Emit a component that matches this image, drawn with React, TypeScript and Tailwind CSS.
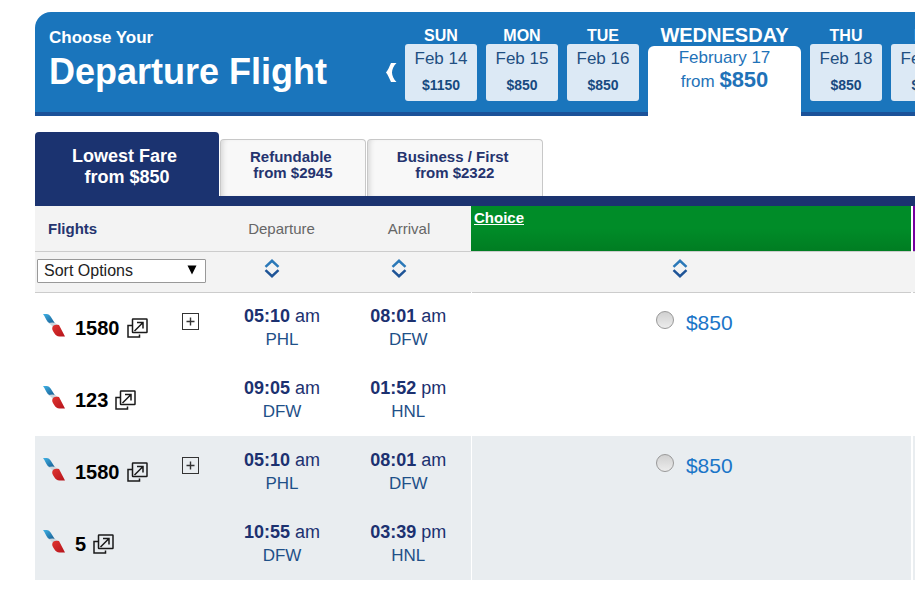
import { useState } from 'react'

interface Leg {
  flight: string
  depart: [string, string, string]
  arrive: [string, string, string]
}

interface Itinerary {
  id: string
  price: string
  legs: Leg[]
}

const days = [
  { day: 'SUN', date: 'Feb 14', price: '$1150' },
  { day: 'MON', date: 'Feb 15', price: '$850' },
  { day: 'TUE', date: 'Feb 16', price: '$850' },
  { day: 'WEDNESDAY', date: 'February 17', price: '$850', selected: true },
  { day: 'THU', date: 'Feb 18', price: '$850' },
  { day: 'FRI', date: 'Feb 19', price: '$850' },
]

const tabs = [
  { name: 'Lowest Fare', price: '$850' },
  { name: 'Refundable', price: '$2945' },
  { name: 'Business / First', price: '$2322' },
]

const itineraries: Itinerary[] = [
  {
    id: 'a',
    price: '$850',
    legs: [
      { flight: '1580', depart: ['05:10', 'am', 'PHL'], arrive: ['08:01', 'am', 'DFW'] },
      { flight: '123', depart: ['09:05', 'am', 'DFW'], arrive: ['01:52', 'pm', 'HNL'] },
    ],
  },
  {
    id: 'b',
    price: '$850',
    legs: [
      { flight: '1580', depart: ['05:10', 'am', 'PHL'], arrive: ['08:01', 'am', 'DFW'] },
      { flight: '5', depart: ['10:55', 'am', 'DFW'], arrive: ['03:39', 'pm', 'HNL'] },
    ],
  },
]

function AirlineLogo() {
  return (
    <svg width="22" height="24" viewBox="0 0 22 24" className="mb-[6px] shrink-0" aria-hidden="true">
      <defs>
        <linearGradient id="tail-blue" x1="0" y1="0" x2="1" y2="1">
          <stop offset="0" stopColor="#3fb2e6" />
          <stop offset="1" stopColor="#155a8f" />
        </linearGradient>
        <linearGradient id="tail-red" x1="0" y1="0" x2="1" y2="1">
          <stop offset="0" stopColor="#e0342f" />
          <stop offset="1" stopColor="#b5141c" />
        </linearGradient>
      </defs>
      <path d="M0 1H3.500C5.500 1 6.800 2.200 7.800 3.800L12 10.500C9 10 6.500 10.800 4.800 9C3.200 7 2 3.500 0 1Z" fill="url(#tail-blue)" />
      <path d="M5.500 10C9.500 9 13 9 15 12.500L10.500 15.500C9.500 13 8 11.500 5.500 10Z" fill="#ccd6dd" />
      <path d="M9.200 15C9.500 12 12.500 11 16 12L22 23.500H16.500C14 23.500 12.500 22 11.200 20C10.100 18.300 9.100 17 9.200 15Z" fill="url(#tail-red)" />
    </svg>
  )
}

function PopupIcon() {
  return (
    <svg width="21" height="20" viewBox="0 0 21 20" fill="none" stroke="#1a1a1a" strokeWidth="1.500" aria-hidden="true">
      <rect x="5.500" y="1" width="14.500" height="13.500" rx="0.500" />
      <path d="M5 7.500H1V19H12.500V16.500" />
      <path d="M7.500 13L16 4.500M10 4.500H16V10.500" />
    </svg>
  )
}

function SortButton({ label }: { label: string }) {
  return (
    <button type="button" aria-label={label} className="mx-auto block">
      <svg width="16" height="19" viewBox="0 0 16 19" fill="none" strokeWidth="2.500" aria-hidden="true">
        <path d="M1.500 7.800L8 1.800L14.500 7.800" stroke="#2a78b8" />
        <path d="M1.500 11.200L8 17.200L14.500 11.200" stroke="#1e5497" />
      </svg>
    </button>
  )
}

function TimeCell({ value }: { value: [string, string, string] }) {
  const [time, suffix, airport] = value
  return (
    <td className="p-0 pl-px text-center">
      <div className="text-lg leading-6 text-[#1c3170]">
        <b>{time}</b> {suffix}
      </div>
      <div className="text-[17px] leading-6 text-[#1f5088]">{airport}</div>
    </td>
  )
}

function DateStrip() {
  return (
    <header className="flex h-[104px] items-start overflow-hidden rounded-tl-2xl bg-[#1a75bc] shadow-[inset_0_-4px_0_#1b5299]">
      <h1 className="w-[350px] shrink-0 pt-4 pl-[14px] font-bold text-white">
        <span className="block text-[17px] leading-5">Choose Your</span>
        <span className="block text-4xl leading-[48px]">Departure Flight</span>
      </h1>
      <button type="button" aria-label="Earlier dates" className="mt-[51px] w-5 shrink-0">
        <svg width="12" height="19" viewBox="0 0 12 19" aria-hidden="true">
          <path d="M6 0H11.500C8.500 3 7 6.500 7 9.500C7 12.500 8.500 16 11.500 19H6C4.500 15.500 3 12 1 9.500C3 7 4.500 3.500 6 0Z" fill="#fff" />
        </svg>
      </button>
      <ul className="flex gap-[9px]">
        {days.map((d) =>
          d.selected ? (
            <li key={d.day} className="w-[153px] shrink-0 text-center">
              <div className="pt-3 text-xl leading-[22px] font-bold text-white">{d.day}</div>
              <button type="button" aria-current="date" className="block h-[70px] w-full rounded-t-md bg-white pb-6 text-[17px] text-[#1f72b8]">
                <span className="block leading-6">{d.date}</span>
                <span className="block leading-5">
                  from <b className="text-[22px] leading-5">{d.price}</b>
                </span>
              </button>
            </li>
          ) : (
            <li key={d.day} className="w-[72px] shrink-0 text-center">
              <div className="pt-4 text-base leading-4 font-bold text-white">{d.day}</div>
              <button type="button" className="block h-[57px] w-full rounded-[3px] bg-[#dce9f5] pb-1 text-[#1f4f82]">
                <span className="block text-[17px] leading-7">{d.date}</span>
                <b className="block text-sm leading-6 text-[#174a80]">{d.price}</b>
              </button>
            </li>
          ),
        )}
      </ul>
    </header>
  )
}

export default function App() {
  const [tab, setTab] = useState(0)
  const [choice, setChoice] = useState('')

  return (
    <main className="overflow-hidden bg-white pt-3 pl-[35px] font-['Liberation_Sans',Arial,sans-serif]">
      <DateStrip />

      {/* Fare type tabs */}
      <div role="tablist" className="mt-4 flex items-end gap-px border-b-[10px] border-[#1b3370]">
        {tabs.map((t, i) => (
          <button
            key={t.name}
            type="button"
            role="tab"
            aria-selected={tab === i}
            onClick={() => setTab(i)}
            className={
              tab === i
                ? 'h-16 w-[184px] rounded-t bg-[#1b3370] pt-[6px] text-lg leading-[21px] font-bold text-white'
                : 'h-[57px] rounded-t border border-b-0 border-[#c8c8c8] bg-[#f8f8f8] px-[29px] pb-[6px] text-[15px] leading-4 font-bold text-[#25346f] shadow-[inset_5px_0_5px_-3px_#d8d8d8]'
            }
          >
            {t.name}&nbsp;
            <br />
            from {t.price}
          </button>
        ))}
      </div>

      <table className="w-full table-fixed border-collapse">
        <colgroup>
          <col className="w-[183px]" />
          <col className="w-[127px]" />
          <col className="w-[126px]" />
          <col />
          <col className="w-[3px]" />
        </colgroup>
        <thead className="bg-[#f3f3f3] text-[15px] text-[#666]">
          <tr className="h-[45px] border-b border-[#ccc]">
            <th scope="col" className="p-0 pt-px pl-[13px] text-left font-bold text-[#25346f]">Flights</th>
            <th scope="col" className="p-0 pt-px font-normal">Departure</th>
            <th scope="col" className="p-0 pt-px pl-[2px] font-normal">Arrival</th>
            <th scope="col" className="bg-linear-to-b from-[#008c28] from-50% to-[#007d22] p-0 pt-[3px] pl-[3px] text-left align-top leading-[18px]">
              <a href="#choice" className="font-bold text-white underline">Choice</a>
            </th>
            <th className="border-l-2 border-white bg-[#7400a0] p-0" />
          </tr>
          <tr className="h-[41px] border-b border-[#ccc]">
            <td className="p-0 pb-px pl-[2px]">
              <div className="relative w-[169px]">
                <select aria-label="Sort Options" className="block h-6 w-full appearance-none rounded-[1px] border border-[#999] bg-white pl-[6px] text-base leading-5 text-[#222]">
                  <option>Sort Options</option>
                  <option>Departure</option>
                  <option>Arrival</option>
                </select>
                <svg width="10" height="10" viewBox="0 0 10 10" className="pointer-events-none absolute top-[6px] right-[9px]" aria-hidden="true">
                  <path d="M0.500 0.500H9.500L5 9.500Z" fill="#000" />
                </svg>
              </div>
            </td>
            <td className="p-0 pr-5 pb-[6px]"><SortButton label="Sort by departure" /></td>
            <td className="p-0 pr-[18px] pb-[6px]"><SortButton label="Sort by arrival" /></td>
            <td className="p-0 pr-6 pb-[6px]"><SortButton label="Sort by price" /></td>
            <td className="p-0" />
          </tr>
        </thead>
        {itineraries.map((trip, n) => (
          <tbody key={trip.id} className={n % 2 ? 'bg-[#e9edf0]' : 'bg-white'}>
            {trip.legs.map((leg, i) => (
              <tr key={leg.flight} className="h-[72px]">
                <td className="p-0">
                  <div className="flex items-center pl-2">
                    <AirlineLogo />
                    <span className="ml-[10px] text-xl leading-6 font-bold text-black">{leg.flight}</span>
                    <button type="button" aria-label={`Details for flight ${leg.flight}`} className="ml-[7px]">
                      <PopupIcon />
                    </button>
                    {i === 0 && (
                      <button type="button" aria-label="Expand itinerary" className="mr-[19px] mb-[14px] ml-auto">
                        <svg width="17" height="17" viewBox="0 0 17 17" fill="none" stroke="#333" aria-hidden="true">
                          <rect x="0.500" y="0.500" width="16" height="16" />
                          <path d="M4.500 8.500H12.500M8.500 4.500V12.500" strokeWidth="1.400" />
                        </svg>
                      </button>
                    )}
                  </div>
                </td>
                <TimeCell value={leg.depart} />
                <TimeCell value={leg.arrive} />
                {i === 0 && (
                  <td rowSpan={trip.legs.length} className="border-l border-white p-0 align-top">
                    <label className="flex items-center justify-center gap-3 pt-[18px] pl-[6px] text-[21px] leading-6 text-[#1a75c8]">
                      <input
                        type="radio"
                        name="fare"
                        checked={choice === trip.id}
                        onChange={() => setChoice(trip.id)}
                        className="mb-[6px] size-[18px] appearance-none rounded-full border border-[#999] bg-linear-to-b from-[#d0d0d0] to-[#ececec] checked:bg-[#1a75c8]"
                      />
                      {trip.price}
                    </label>
                  </td>
                )}
                {i === 0 && <td rowSpan={trip.legs.length} className="border-l-2 border-white p-0" />}
              </tr>
            ))}
          </tbody>
        ))}
      </table>
    </main>
  )
}
